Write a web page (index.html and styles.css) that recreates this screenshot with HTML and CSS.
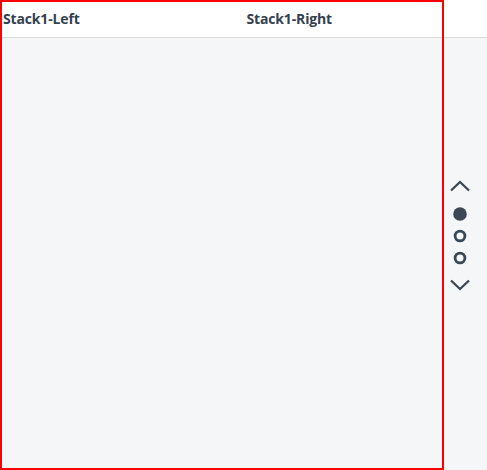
FILE: index.html
```html
<!DOCTYPE html>
<html>
<head>
<meta charset="utf-8">
<link rel="stylesheet" href="styles.css">
</head>
<body>
<div class="page">
  <header class="header">
    <div class="col">Stack1-Left</div>
    <div class="col">Stack1-Right</div>
  </header>
  <main class="content"></main>
  <div class="frame"></div>
  <nav class="pager">
    <svg class="chev" width="22" height="12" viewBox="0 0 22 12"><path d="M2 10.5 L11 2 L20 10.5" fill="none" stroke="currentColor" stroke-width="2.3"/></svg>
    <svg class="dot first" width="14" height="14" viewBox="0 0 14 14"><circle cx="7" cy="7" r="6.8" fill="currentColor"/></svg>
    <svg class="dot" width="14" height="14" viewBox="0 0 14 14"><circle cx="7" cy="7" r="4.9" fill="none" stroke="currentColor" stroke-width="2.8"/></svg>
    <svg class="dot" width="14" height="14" viewBox="0 0 14 14"><circle cx="7" cy="7" r="4.9" fill="none" stroke="currentColor" stroke-width="2.8"/></svg>
    <svg class="chev down" width="22" height="12" viewBox="0 0 22 12"><path d="M2 1.5 L11 10 L20 1.5" fill="none" stroke="currentColor" stroke-width="2.3"/></svg>
  </nav>
</div>
</body>
</html>
```
FILE: styles.css
```css
html, body {
  margin: 0;
  padding: 0;
  height: 100%;
}
body {
  background: #f5f6f7;
  font-family: "Open Sans", "Liberation Sans", sans-serif;
  color: #32363a;
}
.page {
  display: grid;
  grid-template-columns: 444px 1fr;
  grid-template-rows: 38px 1fr;
  height: 100vh;
}
.header {
  grid-column: 1 / 3;
  grid-row: 1;
  background: #fff;
  border-bottom: 1px solid #d9dadc;
  display: grid;
  grid-template-columns: 1fr 1fr;
}
.col {
  padding-left: 3px;
  font-size: 14px;
  font-weight: 700;
  line-height: 37px;
  color: #354150;
  letter-spacing: -0.15px;
}
.content {
  grid-column: 1;
  grid-row: 2;
}
.frame {
  grid-column: 1;
  grid-row: 1 / 3;
  border: 2px solid #ff0000;
  z-index: 2;
}
.pager {
  grid-column: 2;
  grid-row: 1 / 3;
  align-self: center;
  justify-self: start;
  width: 31px;
  display: flex;
  flex-direction: column;
  align-items: center;
  color: #394756;
}
.pager svg { display: block; }
.dot.first { margin-top: 15px; }
.dot { margin-top: 8px; }
.chev.down { margin-top: 14px; }
```
